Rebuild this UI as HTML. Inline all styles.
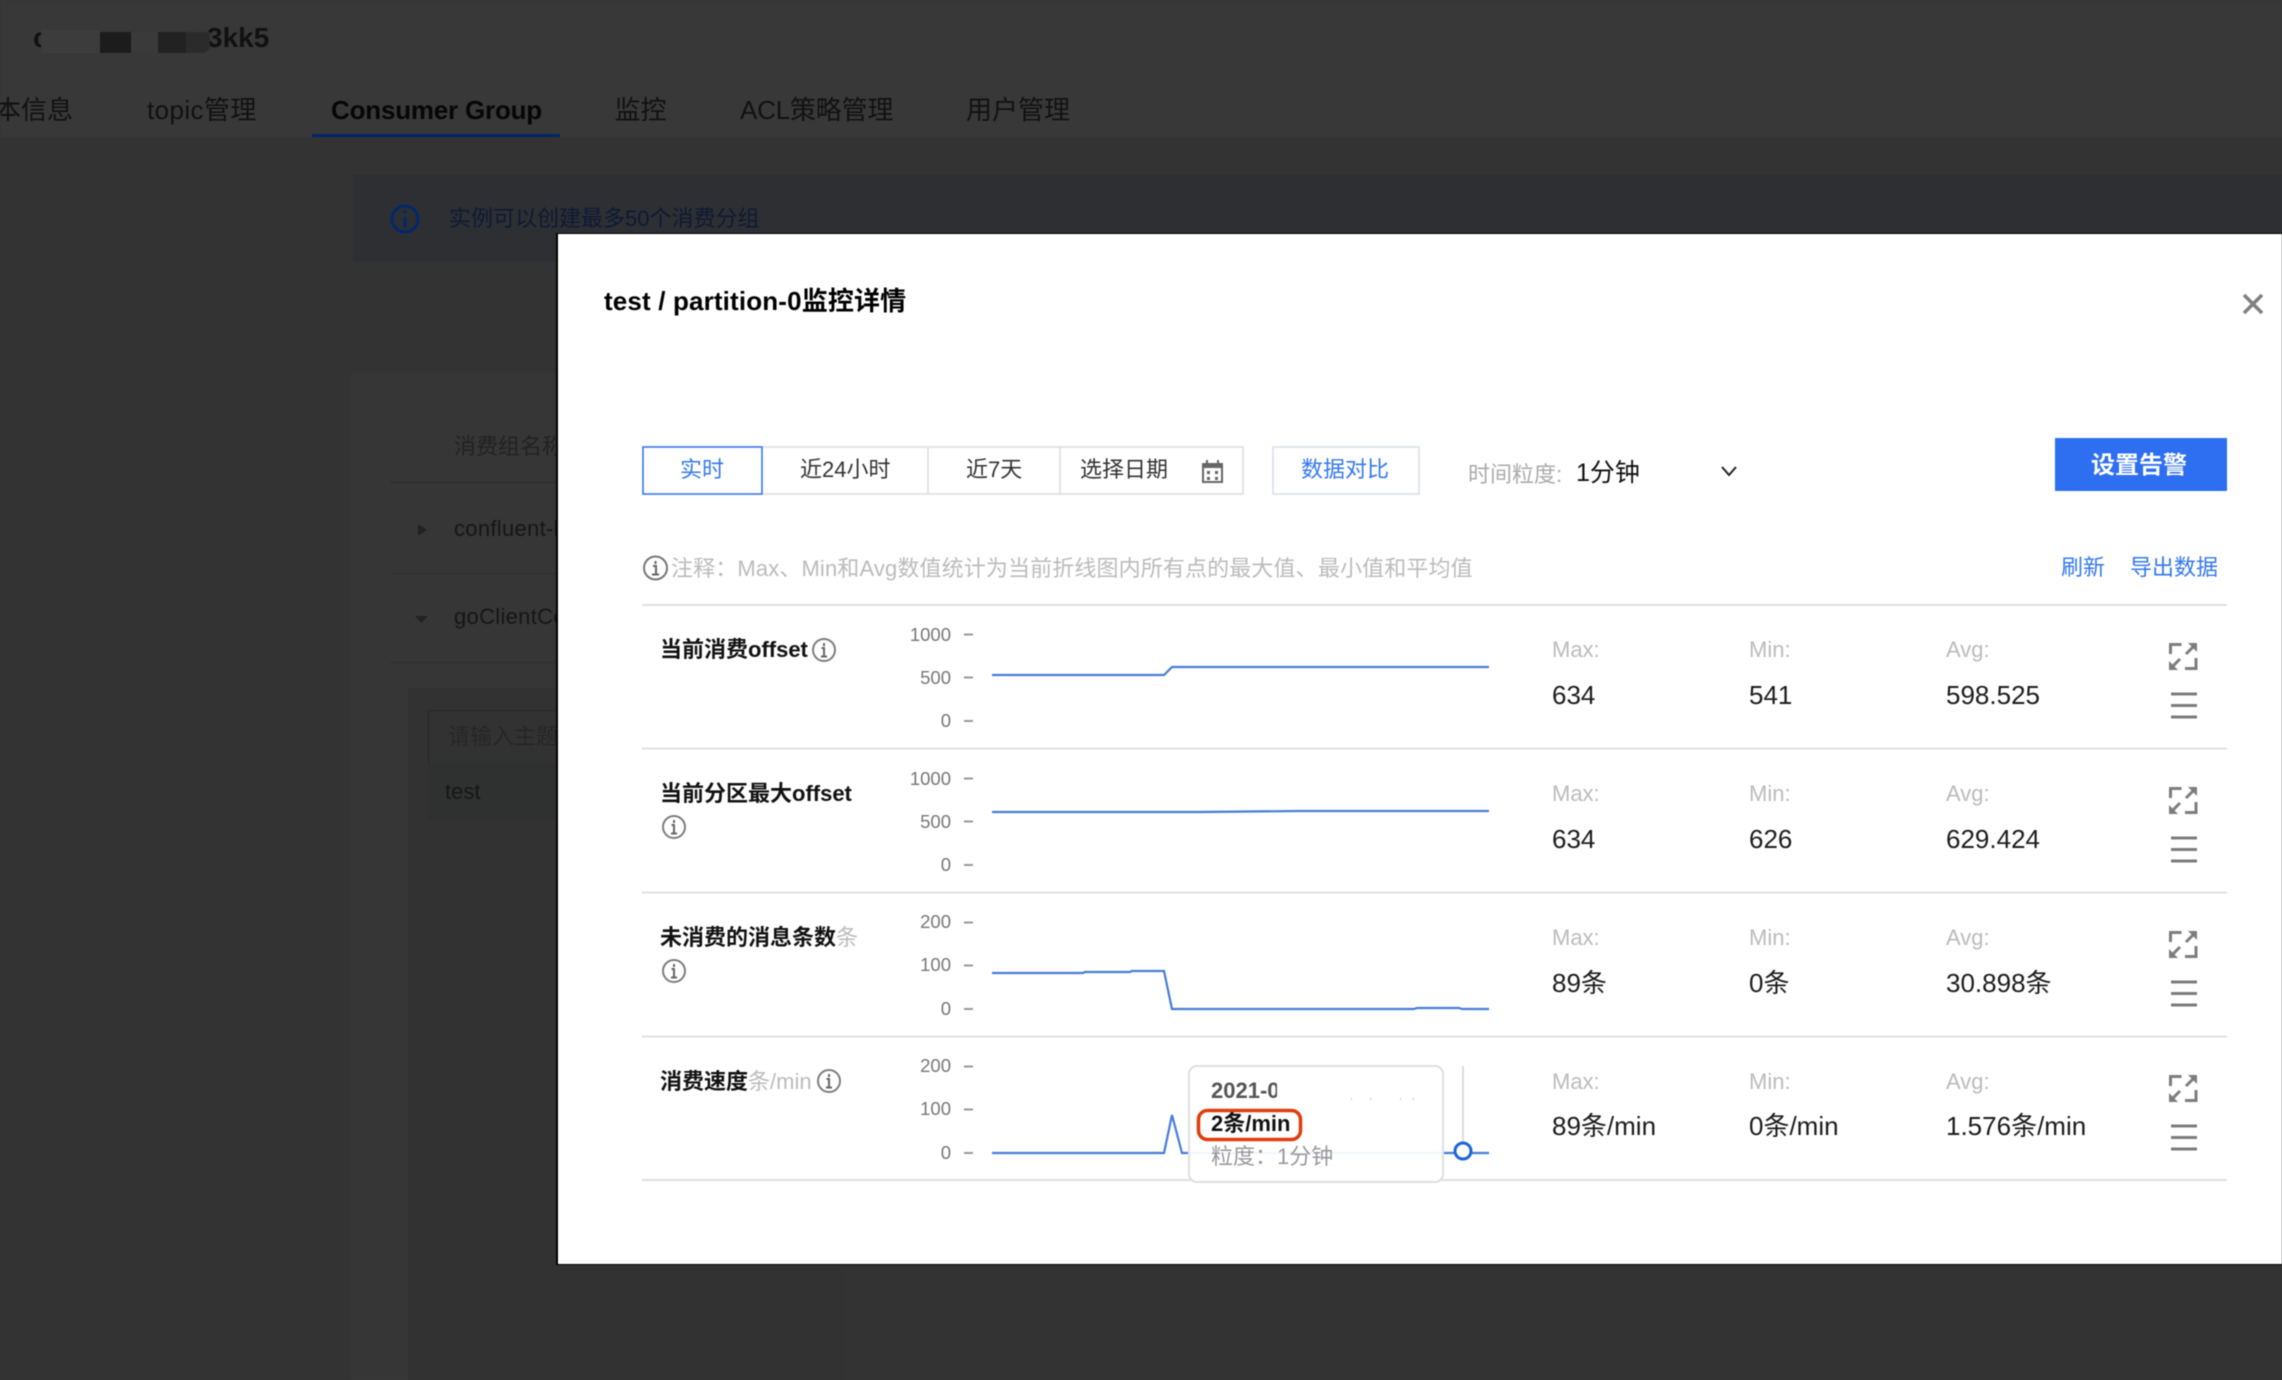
<!DOCTYPE html>
<html lang="zh-CN">
<head>
<meta charset="utf-8">
<title>partition monitor</title>
<style>
html,body{margin:0;padding:0;background:#333;}
#p{position:relative;width:2282px;height:1380px;overflow:hidden;background:#333;font-family:"Liberation Sans","Noto Sans CJK SC",sans-serif;filter:blur(.6px);}
.b{position:absolute;}
.t{position:absolute;white-space:nowrap;line-height:30px;height:30px;font-size:22px;color:#222;}
.g{color:#bbb;font-weight:400;}
.lb{font-weight:700;color:#111;}
.s{color:#bbb;}
.v{font-size:26px;color:#1c1c1c;}
.y{font-size:18.5px;color:#777;text-align:right;width:60px;left:891px;}
.bl{color:#3478ee;}
svg{position:absolute;left:0;top:0;}
</style>
</head>
<body>
<div id="p">
  <!-- page behind the overlay -->
  <div class="b" style="left:0;top:0;width:2282px;height:137px;background:#383838;"></div>
  <div class="b" style="left:351px;top:373px;width:495px;height:1007px;background:#363636;"></div>
  <div class="b" style="left:408px;top:688px;width:438px;height:692px;background:#323232;"></div>
  <div class="b" style="left:353px;top:175px;width:1929px;height:87px;background:#2d2f33;"></div>
  <div class="b" style="left:390px;top:482px;width:456px;height:1px;background:#2b2b2b;"></div>
  <div class="b" style="left:390px;top:573px;width:456px;height:1px;background:#2f2f2f;"></div>
  <div class="b" style="left:390px;top:662px;width:456px;height:1px;background:#2f2f2f;"></div>
  <div class="b" style="left:428px;top:710px;width:300px;height:52px;border:1px solid #262626;"></div>
  <div class="b" style="left:428px;top:763px;width:300px;height:56px;background:#2f3030;"></div>

  <div class="t" style="left:33px;top:23px;font-size:28px;font-weight:700;color:#111;">c</div>
  <div class="t" style="left:207px;top:23px;font-size:28px;font-weight:700;color:#111;">3kk5</div>
  <div class="b" style="left:41px;top:30px;width:59px;height:23px;background:#3c3c3c;"></div>
  <div class="b" style="left:100px;top:32px;width:31px;height:21px;background:#1c1c1c;"></div>
  <div class="b" style="left:131px;top:32px;width:27px;height:21px;background:#3a3a3a;"></div>
  <div class="b" style="left:158px;top:32px;width:28px;height:21px;background:#222;"></div>
  <div class="b" style="left:186px;top:32px;width:24px;height:21px;background:#2b2b2b;border-radius:0 0 8px 0;"></div>

  <div class="t" style="left:-5px;top:95px;font-size:26px;color:#111;">本信息</div>
  <div class="t" style="left:147px;top:95px;font-size:26px;color:#111;letter-spacing:.4px;">topic管理</div>
  <div class="t" style="left:331px;top:95px;font-size:26px;font-weight:700;color:#060606;letter-spacing:-.2px;">Consumer Group</div>
  <div class="t" style="left:614.500px;top:95px;font-size:26px;color:#111;">监控</div>
  <div class="t" style="left:740px;top:95px;font-size:26px;color:#111;letter-spacing:-.2px;">ACL策略管理</div>
  <div class="t" style="left:966px;top:95px;font-size:26px;color:#111;">用户管理</div>
  <div class="b" style="left:312px;top:134px;width:248px;height:3px;background:#00256b;"></div>

  <div class="t" style="left:449px;top:204px;font-size:22px;color:#0e1a33;">实例可以创建最多50个消费分组</div>
  <div class="t" style="left:454px;top:432px;color:#222;">消费组名称</div>
  <div class="t" style="left:454px;top:514px;color:#161616;letter-spacing:.3px;">confluent-l</div>
  <div class="t" style="left:454px;top:602px;color:#161616;letter-spacing:.3px;">goClientCo</div>
  <div class="t" style="left:448px;top:722px;color:#262626;">请输入主题</div>
  <div class="t" style="left:445px;top:777px;color:#161616;">test</div>

  <svg width="2282" height="1380" viewBox="0 0 2282 1380">
    <circle cx="405" cy="219" r="13" fill="none" stroke="#00296b" stroke-width="3"/>
    <path d="M405 217v11M405 210v3" stroke="#00296b" stroke-width="3" fill="none"/>
    <path d="M418 524l9 6-9 6z" fill="#222"/>
    <path d="M415 616h13l-6.500 7z" fill="#222"/>
  </svg>

  <!-- modal -->
  <div class="b" style="left:556px;top:232.500px;width:1726px;height:1032px;background:#000;"></div>
  <div class="b" style="left:558px;top:234px;width:1724px;height:1029.500px;background:#fff;"></div>

  <svg width="2282" height="1380" viewBox="0 0 2282 1380">
    <!-- close -->
    <path d="M2244 295l18 18M2262 295l-18 18" stroke="#808080" stroke-width="3.500" fill="none"/>
    <!-- segmented control -->
    <rect x="643" y="447" width="600" height="47" fill="none" stroke="#dedede" stroke-width="1.600"/>
    <path d="M928 447v47M1060 447v47" stroke="#dedede" stroke-width="1.600"/>
    <rect x="643" y="447" width="119" height="47" fill="#fff" stroke="#3a78f0" stroke-width="1.600"/>
    <rect x="1273" y="447" width="146" height="47" fill="none" stroke="#d9dfea" stroke-width="1.600"/>
    <!-- calendar -->
    <path d="M1203 464h19v18h-19z" fill="none" stroke="#666" stroke-width="2"/>
    <path d="M1203 466h19" stroke="#666" stroke-width="4"/>
    <path d="M1207 460v5M1218 460v5" stroke="#666" stroke-width="2"/>
    <path d="M1207 471h3v3h-3zM1215 471h3v3h-3zM1207 477h3v3h-3zM1215 477h3v3h-3z" fill="#666"/>
    <!-- chevron -->
    <path d="M1722 467l7 8 7-8" fill="none" stroke="#222" stroke-width="2"/>
    <!-- alert button -->
    <rect x="2055" y="438" width="172" height="53" fill="#2d6ff0"/>
    <!-- note icon -->
    <circle cx="655.500" cy="568" r="11.500" fill="none" stroke="#777" stroke-width="2"/>
    <path d="M653 566h3v8M652 574.500h7M655.500 561v3" fill="none" stroke="#666" stroke-width="2"/>
    <!-- dividers -->
    <path d="M642 605h1585M642 748.500h1585M642 892.500h1585M642 1036.500h1585M642 1180h1585" stroke="#e0e0e0" stroke-width="2"/>
    <!-- info icons -->
    <g fill="none" stroke="#7d7d7d" stroke-width="2">
      <circle cx="824" cy="650" r="11"/><path d="M821.500 648h2.500v8M821 656.500h6M824 643v3" stroke="#666"/>
      <circle cx="674" cy="827" r="11"/><path d="M671.500 825h2.500v8M671 833.500h6M674 820v3" stroke="#666"/>
      <circle cx="674" cy="971" r="11"/><path d="M671.500 969h2.500v8M671 977.500h6M674 964v3" stroke="#666"/>
      <circle cx="829" cy="1081" r="11"/><path d="M826.500 1079h2.500v8M826 1087.500h6M829 1074v3" stroke="#666"/>
    </g>
    <!-- axis ticks -->
    <path d="M964 634.500h9M964 677.500h9M964 721h9M964 778.500h9M964 821.500h9M964 865h9M964 922.500h9M964 965.500h9M964 1009h9M964 1066.500h9M964 1109.500h9M964 1153h9" stroke="#999" stroke-width="2"/>
    <!-- chart lines -->
    <g fill="none" stroke="#477dd8" stroke-width="2.200">
      <path d="M992 675H1164L1172 667H1489"/>
      <path d="M992 812H1200L1300 811H1489"/>
      <path d="M992 973H1083L1085 972H1130L1132 971H1164L1172 1009H1414L1417 1008H1459L1462 1009H1489"/>
      <path d="M992 1153H1164L1172 1115L1182 1153H1489"/>
    </g>
    <!-- expand / menu icons -->
    <g fill="none" stroke="#7d7d7d" stroke-width="3">
      <path d="M2170.500 654v-9.500h11M2196 658v10.500h-11"/>
      <path d="M2186 654l7-7M2180 659l-7 7"/>
      <path d="M2197 643h-9l9 9zM2169 670h9l-9-9z" fill="#7d7d7d" stroke="none"/>
      <path d="M2171 694h26M2171 705.500h26M2171 717h26"/>
    </g>
    <g fill="none" stroke="#7d7d7d" stroke-width="3" transform="translate(0 144)">
      <path d="M2170.500 654v-9.500h11M2196 658v10.500h-11"/>
      <path d="M2186 654l7-7M2180 659l-7 7"/>
      <path d="M2197 643h-9l9 9zM2169 670h9l-9-9z" fill="#7d7d7d" stroke="none"/>
      <path d="M2171 694h26M2171 705.500h26M2171 717h26"/>
    </g>
    <g fill="none" stroke="#7d7d7d" stroke-width="3" transform="translate(0 288)">
      <path d="M2170.500 654v-9.500h11M2196 658v10.500h-11"/>
      <path d="M2186 654l7-7M2180 659l-7 7"/>
      <path d="M2197 643h-9l9 9zM2169 670h9l-9-9z" fill="#7d7d7d" stroke="none"/>
      <path d="M2171 694h26M2171 705.500h26M2171 717h26"/>
    </g>
    <g fill="none" stroke="#7d7d7d" stroke-width="3" transform="translate(0 432)">
      <path d="M2170.500 654v-9.500h11M2196 658v10.500h-11"/>
      <path d="M2186 654l7-7M2180 659l-7 7"/>
      <path d="M2197 643h-9l9 9zM2169 670h9l-9-9z" fill="#7d7d7d" stroke="none"/>
      <path d="M2171 694h26M2171 705.500h26M2171 717h26"/>
    </g>
    <!-- hover guide -->
    <path d="M1463 1066v76" stroke="#ddd" stroke-width="2"/>
    <circle cx="1463" cy="1151" r="8" fill="#fff" stroke="#1a66d8" stroke-width="3"/>
    <!-- tooltip -->
    <rect x="1189" y="1066" width="254" height="116" rx="8" fill="#fff" fill-opacity=".93" stroke="#dedede" stroke-width="2"/>
    <path d="M1351 1099h1M1370 1099h1M1400 1099h1M1413 1099h1" stroke="#ccc" stroke-width="2"/>
    <rect x="1198.500" y="1110.500" width="102" height="29" rx="9" fill="#fff" stroke="#e03c0c" stroke-width="3.500"/>
  </svg>

  <div class="t" style="left:604px;top:285.500px;font-size:26px;font-weight:700;color:#000;letter-spacing:.15px;">test / partition-0监控详情</div>

  <div class="t bl" style="left:680px;top:455px;">实时</div>
  <div class="t" style="left:800px;top:455px;color:#333;">近24小时</div>
  <div class="t" style="left:966px;top:455px;color:#333;">近7天</div>
  <div class="t" style="left:1080px;top:455px;color:#333;">选择日期</div>
  <div class="t bl" style="left:1301px;top:455px;">数据对比</div>
  <div class="t" style="left:1468px;top:460px;color:#aaa;">时间粒度:</div>
  <div class="t" style="left:1576px;top:458px;font-size:25px;color:#111;">1分钟</div>
  <div class="t" style="left:2091px;top:451px;font-size:24px;font-weight:700;color:#fff;">设置告警</div>

  <div class="t" style="left:671px;top:554px;color:#bbb;letter-spacing:.13px;">注释：Max、Min和Avg数值统计为当前折线图内所有点的最大值、最小值和平均值</div>
  <div class="t bl" style="left:2061px;top:553px;">刷新</div>
  <div class="t bl" style="left:2130px;top:553px;">导出数据</div>

  <!-- row labels -->
  <div class="t lb" style="left:660px;top:635px;">当前消费offset</div>
  <div class="t lb" style="left:660px;top:779px;">当前分区最大offset</div>
  <div class="t lb" style="left:660px;top:923px;">未消费的消息条数<span class="g">条</span></div>
  <div class="t lb" style="left:660px;top:1067px;">消费速度<span class="g">条/min</span></div>

  <!-- y axes -->
  <div class="t y" style="top:620px;">1000</div><div class="t y" style="top:663px;">500</div><div class="t y" style="top:706px;">0</div>
  <div class="t y" style="top:764px;">1000</div><div class="t y" style="top:807px;">500</div><div class="t y" style="top:850px;">0</div>
  <div class="t y" style="top:907px;">200</div><div class="t y" style="top:950px;">100</div><div class="t y" style="top:994px;">0</div>
  <div class="t y" style="top:1051px;">200</div><div class="t y" style="top:1094px;">100</div><div class="t y" style="top:1138px;">0</div>

  <!-- stats -->
  <div class="t s" style="left:1552px;top:635px;">Max:</div><div class="t s" style="left:1749px;top:635px;">Min:</div><div class="t s" style="left:1946px;top:635px;">Avg:</div>
  <div class="t v" style="left:1552px;top:679.500px;">634</div><div class="t v" style="left:1749px;top:679.500px;">541</div><div class="t v" style="left:1946px;top:679.500px;">598.525</div>

  <div class="t s" style="left:1552px;top:779px;">Max:</div><div class="t s" style="left:1749px;top:779px;">Min:</div><div class="t s" style="left:1946px;top:779px;">Avg:</div>
  <div class="t v" style="left:1552px;top:823.500px;">634</div><div class="t v" style="left:1749px;top:823.500px;">626</div><div class="t v" style="left:1946px;top:823.500px;">629.424</div>

  <div class="t s" style="left:1552px;top:923px;">Max:</div><div class="t s" style="left:1749px;top:923px;">Min:</div><div class="t s" style="left:1946px;top:923px;">Avg:</div>
  <div class="t v" style="left:1552px;top:968px;">89条</div><div class="t v" style="left:1749px;top:968px;">0条</div><div class="t v" style="left:1946px;top:968px;">30.898条</div>

  <div class="t s" style="left:1552px;top:1067px;">Max:</div><div class="t s" style="left:1749px;top:1067px;">Min:</div><div class="t s" style="left:1946px;top:1067px;">Avg:</div>
  <div class="t v" style="left:1552px;top:1111px;">89条/min</div><div class="t v" style="left:1749px;top:1111px;">0条/min</div><div class="t v" style="left:1946px;top:1111px;">1.576条/min</div>

  <!-- tooltip text -->
  <div class="t" style="left:1211px;top:1076px;width:66px;overflow:hidden;font-weight:700;color:#555;">2021-09</div>
  <div class="t" style="left:1211px;top:1109px;font-weight:700;color:#111;">2条/min</div>
  <div class="t" style="left:1211px;top:1142px;color:#999;">粒度：1分钟</div>
</div>
</body>
</html>
